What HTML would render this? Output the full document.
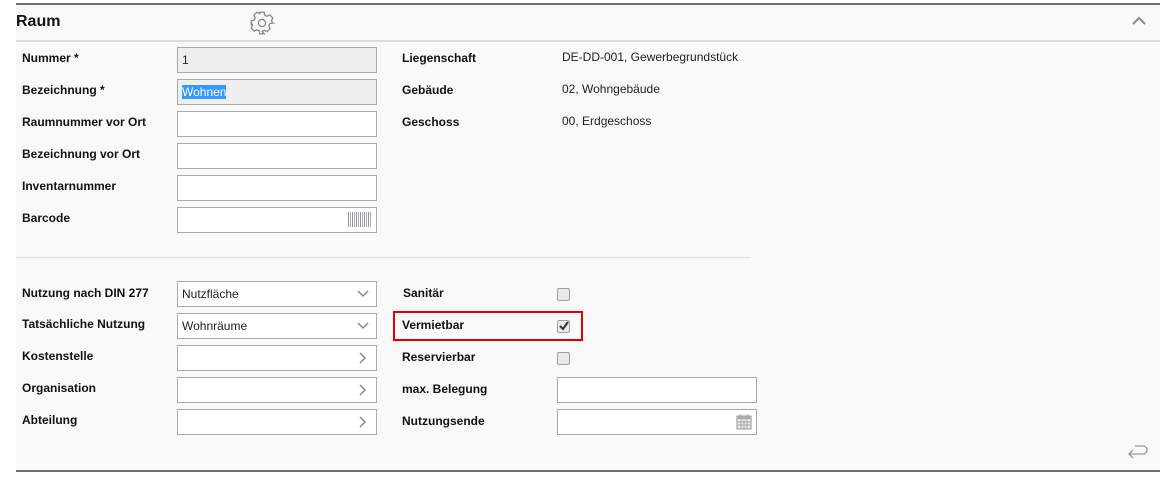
<!DOCTYPE html><html><head><style>
body{margin:0;width:1173px;height:477px;background:#fff;font-family:"Liberation Sans",Arial,sans-serif;position:relative;overflow:hidden}
.p{position:absolute;left:16px;top:3px;width:1144px;height:469px;background:#f9f9f9;border-top:2px solid #6e6e6e;border-bottom:2px solid #6e6e6e;box-sizing:border-box}
.a{position:absolute}
.l{position:absolute;font-size:12px;font-weight:bold;color:#111}
.v{position:absolute;font-size:12px;color:#222}
.i{position:absolute;width:200px;height:26px;border:1px solid #a9a9a9;background:#fff;box-sizing:border-box;font-size:12px;padding:5px 0 0 4px;color:#222}
.g{background:#efefef}
.cb{position:absolute;width:11px;height:11px;border:1px solid #a0a0a0;border-radius:2px;background:#e9e9e9}
</style></head><body>
<div class="p"></div>
<div class="a" style="left:16px;top:40px;width:1144px;height:2px;background:#dcdcdc"></div>
<div class="a" style="left:16px;top:13px;font-size:16px;font-weight:bold;color:#111">Raum</div>
<svg class="a" style="left:249px;top:10px" width="26" height="26" viewBox="0 0 24 24" fill="none" stroke="#8a8a8a" stroke-width="1.2"><path d="M10 2h4l.6 2.8 2 1 2.6-1.3 2.8 2.8-1.3 2.6 1 2L22 12v0l-2.8.6-1 2 1.3 2.6-2.8 2.8-2.6-1.3-2 1L14 22h-4l-.6-2.8-2-1-2.6 1.3-2.8-2.8 1.3-2.6-1-2L2 14v-4l2.8-.6 1-2L4.5 4.8 7.3 2l2.6 1.3z"/><circle cx="12" cy="12" r="3.3"/></svg>
<svg class="a" style="left:1132px;top:16px" width="14" height="10" viewBox="0 0 14 10" fill="none" stroke="#888" stroke-width="2"><path d="M1 8l6-6 6 6"/></svg>
<div class="l" style="left:22px;top:51px">Nummer *</div>
<div class="l" style="left:22px;top:83px">Bezeichnung *</div>
<div class="l" style="left:22px;top:115px">Raumnummer vor Ort</div>
<div class="l" style="left:22px;top:147px">Bezeichnung vor Ort</div>
<div class="l" style="left:22px;top:179px">Inventarnummer</div>
<div class="l" style="left:22px;top:211px">Barcode</div>
<div class="i g" style="left:177px;top:47px">1</div>
<div class="i g" style="left:177px;top:79px"><span style="background:#3399ff;color:#fff">Wohnen</span></div>
<div class="i" style="left:177px;top:111px"></div>
<div class="i" style="left:177px;top:143px"></div>
<div class="i" style="left:177px;top:175px"></div>
<div class="i" style="left:177px;top:207px"></div>
<div class="a" style="left:348px;top:212px;width:23px;height:15px;background:repeating-linear-gradient(90deg,#8a92a8 0 1px,#fff 1px 2px,#b0a8a0 2px 3px,#fff 3px 4px)"></div>
<div class="l" style="left:402px;top:51px">Liegenschaft</div>
<div class="l" style="left:402px;top:83px">Gebäude</div>
<div class="l" style="left:402px;top:115px">Geschoss</div>
<div class="v" style="left:562px;top:50px">DE-DD-001, Gewerbegrundstück</div>
<div class="v" style="left:562px;top:82px">02, Wohngebäude</div>
<div class="v" style="left:562px;top:114px">00, Erdgeschoss</div>
<div class="a" style="left:16px;top:257px;width:735px;height:1px;background:#dedede"></div>
<div class="l" style="left:22px;top:286px">Nutzung nach DIN 277</div>
<div class="l" style="left:22px;top:317px">Tatsächliche Nutzung</div>
<div class="l" style="left:22px;top:349px">Kostenstelle</div>
<div class="l" style="left:22px;top:381px">Organisation</div>
<div class="l" style="left:22px;top:413px">Abteilung</div>
<div class="i" style="left:177px;top:281px">Nutzfläche</div>
<div class="i" style="left:177px;top:313px">Wohnräume</div>
<div class="i" style="left:177px;top:345px"></div>
<div class="i" style="left:177px;top:377px"></div>
<div class="i" style="left:177px;top:409px"></div>
<svg class="a" style="left:357px;top:290px" width="12" height="8"><path d="M1 1l5 5 5-5" fill="none" stroke="#888" stroke-width="1.5"/></svg>
<svg class="a" style="left:357px;top:322px" width="12" height="8"><path d="M1 1l5 5 5-5" fill="none" stroke="#888" stroke-width="1.5"/></svg>
<svg class="a" style="left:359px;top:352px" width="8" height="12"><path d="M1 1l5 5-5 5" fill="none" stroke="#888" stroke-width="1.5"/></svg>
<svg class="a" style="left:359px;top:384px" width="8" height="12"><path d="M1 1l5 5-5 5" fill="none" stroke="#888" stroke-width="1.5"/></svg>
<svg class="a" style="left:359px;top:416px" width="8" height="12"><path d="M1 1l5 5-5 5" fill="none" stroke="#888" stroke-width="1.5"/></svg>
<div class="l" style="left:403px;top:286px">Sanitär</div>
<div class="l" style="left:402px;top:318px">Vermietbar</div>
<div class="l" style="left:402px;top:350px">Reservierbar</div>
<div class="l" style="left:402px;top:382px">max. Belegung</div>
<div class="l" style="left:402px;top:414px">Nutzungsende</div>
<div class="cb" style="left:557px;top:288px"></div>
<div class="cb" style="left:557px;top:320px"></div>
<svg class="a" style="left:559px;top:321px" width="10" height="10"><path d="M1 5l3 3 5-7" fill="none" stroke="#333" stroke-width="2"/></svg>
<div class="cb" style="left:557px;top:352px"></div>
<div class="a" style="left:393px;top:311px;width:186px;height:26px;border:2px solid #e00000"></div>
<div class="i" style="left:557px;top:377px"></div>
<div class="i" style="left:557px;top:409px"></div>
<svg class="a" style="left:736px;top:413px" width="16" height="17"><rect x="1" y="3" width="14" height="13" fill="#e8e8e8" stroke="#999"/><rect x="1" y="3" width="14" height="3" fill="#aaa"/><path d="M4 1v4M12 1v4M1 9h14M1 12h14M5 6v10M8 6v10M11 6v10" stroke="#aaa"/></svg>
<svg class="a" style="left:1126px;top:444px" width="24" height="18" viewBox="0 0 24 18" fill="none" stroke="#999" stroke-width="1.3"><path d="M4 10h13a4 4 0 0 0 0-8H9M7 6l-4 4 4 4"/></svg>
</body></html>
